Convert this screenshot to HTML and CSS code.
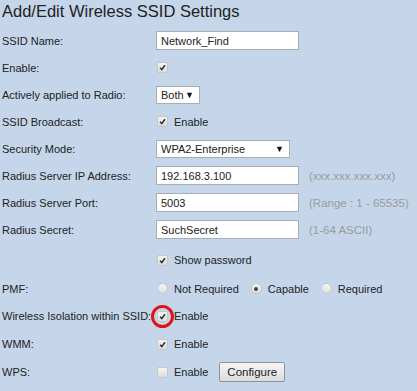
FILE: index.html
```html
<!DOCTYPE html>
<html lang="en">
<head>
    <meta charset="UTF-8">
    <title>Add/Edit Wireless SSID Settings</title>
    <link rel="stylesheet" href="styles.css">
</head>
<body>
    <div class="page">
        <h1 class="title">Add/Edit Wireless SSID Settings</h1>

        <div class="row">
            <span class="label">SSID Name:</span>
            <div class="field"><input class="text-input" type="text" value="Network_Find"></div>
        </div>

        <div class="row">
            <span class="label">Enable:</span>
            <div class="field">
                <span class="check checked"><svg viewBox="0 0 10 10"><path d="M2.3 5.3 L4.2 7.2 L7.8 2.6"/></svg></span>
            </div>
        </div>

        <div class="row">
            <span class="label">Actively applied to Radio:</span>
            <div class="field">
                <span class="select select-small">Both <span class="arrow">&#9660;</span></span>
            </div>
        </div>

        <div class="row">
            <span class="label">SSID Broadcast:</span>
            <div class="field">
                <span class="check checked"><svg viewBox="0 0 10 10"><path d="M2.3 5.3 L4.2 7.2 L7.8 2.6"/></svg></span>
                <span class="option-text">Enable</span>
            </div>
        </div>

        <div class="row">
            <span class="label">Security Mode:</span>
            <div class="field">
                <span class="select select-wide">WPA2-Enterprise <span class="arrow">&#9660;</span></span>
            </div>
        </div>

        <div class="row">
            <span class="label">Radius Server IP Address:</span>
            <div class="field">
                <input class="text-input" type="text" value="192.168.3.100">
                <span class="hint">(xxx.xxx.xxx.xxx)</span>
            </div>
        </div>

        <div class="row">
            <span class="label">Radius Server Port:</span>
            <div class="field">
                <input class="text-input" type="text" value="5003">
                <span class="hint">(Range : 1 - 65535)</span>
            </div>
        </div>

        <div class="row">
            <span class="label">Radius Secret:</span>
            <div class="field">
                <input class="text-input" type="text" value="SuchSecret">
                <span class="hint">(1-64 ASCII)</span>
            </div>
        </div>

        <div class="row row-tall">
            <span class="label"></span>
            <div class="field">
                <span class="check checked"><svg viewBox="0 0 10 10"><path d="M2.3 5.3 L4.2 7.2 L7.8 2.6"/></svg></span>
                <span class="option-text">Show password</span>
            </div>
        </div>

        <div class="row">
            <span class="label">PMF:</span>
            <div class="field">
                <span class="radio"></span>
                <span class="option-text">Not Required</span>
                <span class="radio selected"></span>
                <span class="option-text">Capable</span>
                <span class="radio"></span>
                <span class="option-text">Required</span>
            </div>
        </div>

        <div class="row row-loose">
            <span class="label">Wireless Isolation within SSID:</span>
            <div class="field">
                <span class="check checked highlight"><svg viewBox="0 0 10 10"><path d="M2.3 5.3 L4.2 7.2 L7.8 2.6"/></svg></span>
                <span class="option-text">Enable</span>
            </div>
        </div>

        <div class="row row-loose">
            <span class="label">WMM:</span>
            <div class="field">
                <span class="check checked"><svg viewBox="0 0 10 10"><path d="M2.3 5.3 L4.2 7.2 L7.8 2.6"/></svg></span>
                <span class="option-text">Enable</span>
            </div>
        </div>

        <div class="row row-loose">
            <span class="label">WPS:</span>
            <div class="field">
                <span class="check"></span>
                <span class="option-text">Enable</span>
                <button class="button" type="button">Configure</button>
            </div>
        </div>
    </div>
</body>
</html>
```

FILE: styles.css
```css
body {
    margin: 0;
    background-color: #c5d6ea;
    font-family: "Liberation Sans", Arial, sans-serif;
    font-size: 11px;
    color: #222;
}

.page {
    padding-left: 2px;
}

.title {
    margin: 0;
    height: 27px;
    padding-top: 1px;
    box-sizing: border-box;
    font-size: 16.5px;
    font-weight: normal;
    line-height: 20px;
    color: #222;
}

.row {
    display: flex;
    align-items: center;
    height: 27px;
}

.row-tall {
    height: 30px;
    margin-top: 2px;
}

.row-loose {
    height: 28px;
}

.label {
    width: 154px;
    flex-shrink: 0;
    white-space: nowrap;
}

.field {
    display: flex;
    align-items: center;
}

.text-input {
    width: 143px;
    height: 19px;
    box-sizing: border-box;
    margin: 0;
    padding: 0 0 0 4px;
    border: 1px solid #a8aeb6;
    background: #fff;
    font-family: inherit;
    font-size: 11px;
    color: #222;
}

.hint {
    margin-left: 10px;
    color: #9a9a9a;
    font-size: 11.5px;
}

.select {
    display: flex;
    align-items: center;
    justify-content: space-between;
    height: 18px;
    box-sizing: border-box;
    padding: 0 5px 0 4px;
    border: 1px solid #a8aeb6;
    background: #fff;
    color: #222;
}

.select-small {
    width: 44px;
}

.select-wide {
    width: 134px;
}

.arrow {
    font-size: 9px;
    color: #111;
}

.check {
    position: relative;
    display: inline-flex;
    width: 9px;
    height: 9px;
    margin-left: 1px;
    border: 1px solid #c6c6c6;
    border-radius: 2px;
    background: linear-gradient(#f4f4f4, #dcdcdc);
}

.check svg {
    width: 9px;
    height: 9px;
}

.check path {
    fill: none;
    stroke: #333;
    stroke-width: 1.7;
}

.highlight::after {
    content: "";
    position: absolute;
    left: -7px;
    top: -7px;
    width: 17px;
    height: 17px;
    border: 3px solid #e0121b;
    border-radius: 50%;
}

.option-text {
    margin-left: 6px;
    margin-right: 11px;
}

.radio {
    display: inline-block;
    position: relative;
    width: 9px;
    height: 9px;
    margin-left: 1px;
    border: 1px solid #c6c6c6;
    border-radius: 50%;
    background: linear-gradient(#f6f6f6, #dedede);
}

.radio.selected::after {
    content: "";
    position: absolute;
    left: 2.5px;
    top: 2.5px;
    width: 4px;
    height: 4px;
    border-radius: 50%;
    background: #444;
}

.button {
    height: 20px;
    width: 66px;
    padding: 0;
    border: 1px solid #8e9399;
    border-radius: 2px;
    background: linear-gradient(#f7f7f7, #dcdcdc);
    font-family: inherit;
    font-size: 11.5px;
    color: #222;
}
```
